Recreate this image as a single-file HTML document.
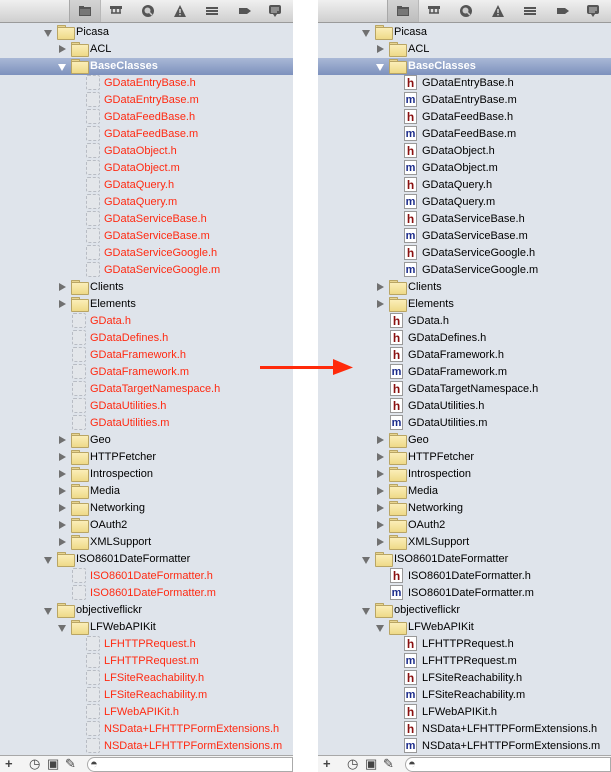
<!DOCTYPE html>
<html><head><meta charset="utf-8"><style>
*{margin:0;padding:0;box-sizing:border-box}
body{width:611px;height:772px;background:#fff;position:relative;overflow:hidden;font-family:"Liberation Sans",sans-serif;font-size:11px}
.p{position:absolute;top:0;width:293px;height:772px;background:#dfe4eb;overflow:hidden}
.tb{height:23px;background:linear-gradient(#f0f0f0,#cfcfcf);border-bottom:1px solid #9a9a9a;position:relative}
.tb .sel{position:absolute;left:69px;top:0;width:32px;height:22px;background:linear-gradient(#d4d4d4,#bdbdbd);border-left:1px solid #a8a8a8;border-right:1px solid #b8b8b8}
.tb svg{position:absolute;top:4px}
.list{padding-top:1px}
.r{display:block;height:17px;line-height:17px;white-space:nowrap;position:relative}
.r b{font-style:normal;display:inline-block;vertical-align:top;position:relative;top:-1px}
.t{width:8px;height:8px;margin:5px 5px 0 0}
.t.c::before{content:"";position:absolute;left:1px;top:0;border-left:7px solid #707070;border-top:4px solid transparent;border-bottom:4px solid transparent}
.t.o::before{content:"";position:absolute;left:0;top:2px;border-top:7px solid #707070;border-left:4px solid transparent;border-right:4px solid transparent}
.f{width:16px;height:13px;margin:2px 3px 0 0}
.f::before{content:"";position:absolute;left:0;top:0;width:7px;height:3px;background:#e8d590;border:1px solid #b9a564;border-bottom:none;border-radius:1px 1px 0 0}
.f::after{content:"";position:absolute;left:0;top:2px;width:16px;height:11px;background:linear-gradient(#fbeeb8,#eed988);border:1px solid #b9a564;border-radius:1px}
.d{width:14px;height:15px;margin:1px 4px 0 0;border:1px dashed #b8bcc4;border-radius:2px;background:#e3e6ea}
.h,.m{width:13px;height:15px;margin:1px 5px 0 0;background:#fff;border:1px solid #999;font-family:"Liberation Sans",sans-serif;font-weight:bold;font-size:12px;line-height:14px;text-align:center}
.h{color:#8a1010}.m{color:#1a2a8a;font-size:11px}
.L .x{color:#ff2a12}
.s{background:linear-gradient(#a9b8d6,#7d91bd);color:#fff;font-weight:bold}
.s .t.o::before{border-top-color:#fff}
.bb{position:absolute;left:0;top:755px;width:293px;height:17px;background:#f4f4f4;border-top:1px solid #a8a8a8}
.bb span{position:absolute;top:0;font-size:13px;line-height:16px;color:#444}
.sf{position:absolute;left:87px;top:1px;width:206px;height:15px;border:1px solid #aaa;border-radius:8px 0 0 8px;background:#fff}
</style></head><body>

<div class="p L" style="left:0">
<div class="tb"><div class="sel"></div>
<svg style="left:78px" width="14" height="14"><rect x="1" y="3" width="12" height="9" fill="#555"/><rect x="1" y="2" width="5" height="2" fill="#555"/><rect x="2" y="5" width="10" height="6" fill="#777"/></svg>
<svg style="left:109px" width="14" height="14"><rect x="1" y="2" width="12" height="3" fill="#555"/><path d="M3 5v4M7 5v4M11 5v4M2 9h10" stroke="#555" stroke-width="1.5" fill="none"/></svg>
<svg style="left:141px" width="14" height="14"><circle cx="7" cy="7" r="6" fill="#555"/><circle cx="6.5" cy="6.5" r="3" fill="#ccc"/><path d="M8 8l3 3" stroke="#ccc" stroke-width="1.5"/></svg>
<svg style="left:173px" width="14" height="14"><path d="M7 1L13 13H1Z" fill="#555"/><rect x="6.3" y="5" width="1.4" height="4" fill="#ddd"/><rect x="6.3" y="10" width="1.4" height="1.4" fill="#ddd"/></svg>
<svg style="left:205px" width="14" height="14"><rect x="1" y="3" width="12" height="2" fill="#555"/><rect x="1" y="6" width="12" height="2" fill="#555"/><rect x="1" y="9" width="12" height="2" fill="#555"/></svg>
<svg style="left:238px" width="14" height="14"><path d="M1 4h8l4 3-4 3H1Z" fill="#555"/></svg>
<svg style="left:268px" width="14" height="14"><rect x="1" y="1" width="12" height="9" rx="2" fill="#555"/><path d="M5 10l2 3 2-3" fill="#555"/><path d="M3 4h8M3 6h8M3 8h6" stroke="#ccc"/></svg>
</div>
<div class="list">
<div class="r" style="padding-left:44px"><b class="t o"></b><b class="f"></b>Picasa</div>
<div class="r" style="padding-left:58px"><b class="t c"></b><b class="f"></b>ACL</div>
<div class="r s" style="padding-left:58px"><b class="t o"></b><b class="f"></b>BaseClasses</div>
<div class="r" style="padding-left:86px"><b class="d"></b><span class="x">GDataEntryBase.h</span></div>
<div class="r" style="padding-left:86px"><b class="d"></b><span class="x">GDataEntryBase.m</span></div>
<div class="r" style="padding-left:86px"><b class="d"></b><span class="x">GDataFeedBase.h</span></div>
<div class="r" style="padding-left:86px"><b class="d"></b><span class="x">GDataFeedBase.m</span></div>
<div class="r" style="padding-left:86px"><b class="d"></b><span class="x">GDataObject.h</span></div>
<div class="r" style="padding-left:86px"><b class="d"></b><span class="x">GDataObject.m</span></div>
<div class="r" style="padding-left:86px"><b class="d"></b><span class="x">GDataQuery.h</span></div>
<div class="r" style="padding-left:86px"><b class="d"></b><span class="x">GDataQuery.m</span></div>
<div class="r" style="padding-left:86px"><b class="d"></b><span class="x">GDataServiceBase.h</span></div>
<div class="r" style="padding-left:86px"><b class="d"></b><span class="x">GDataServiceBase.m</span></div>
<div class="r" style="padding-left:86px"><b class="d"></b><span class="x">GDataServiceGoogle.h</span></div>
<div class="r" style="padding-left:86px"><b class="d"></b><span class="x">GDataServiceGoogle.m</span></div>
<div class="r" style="padding-left:58px"><b class="t c"></b><b class="f"></b>Clients</div>
<div class="r" style="padding-left:58px"><b class="t c"></b><b class="f"></b>Elements</div>
<div class="r" style="padding-left:72px"><b class="d"></b><span class="x">GData.h</span></div>
<div class="r" style="padding-left:72px"><b class="d"></b><span class="x">GDataDefines.h</span></div>
<div class="r" style="padding-left:72px"><b class="d"></b><span class="x">GDataFramework.h</span></div>
<div class="r" style="padding-left:72px"><b class="d"></b><span class="x">GDataFramework.m</span></div>
<div class="r" style="padding-left:72px"><b class="d"></b><span class="x">GDataTargetNamespace.h</span></div>
<div class="r" style="padding-left:72px"><b class="d"></b><span class="x">GDataUtilities.h</span></div>
<div class="r" style="padding-left:72px"><b class="d"></b><span class="x">GDataUtilities.m</span></div>
<div class="r" style="padding-left:58px"><b class="t c"></b><b class="f"></b>Geo</div>
<div class="r" style="padding-left:58px"><b class="t c"></b><b class="f"></b>HTTPFetcher</div>
<div class="r" style="padding-left:58px"><b class="t c"></b><b class="f"></b>Introspection</div>
<div class="r" style="padding-left:58px"><b class="t c"></b><b class="f"></b>Media</div>
<div class="r" style="padding-left:58px"><b class="t c"></b><b class="f"></b>Networking</div>
<div class="r" style="padding-left:58px"><b class="t c"></b><b class="f"></b>OAuth2</div>
<div class="r" style="padding-left:58px"><b class="t c"></b><b class="f"></b>XMLSupport</div>
<div class="r" style="padding-left:44px"><b class="t o"></b><b class="f"></b>ISO8601DateFormatter</div>
<div class="r" style="padding-left:72px"><b class="d"></b><span class="x">ISO8601DateFormatter.h</span></div>
<div class="r" style="padding-left:72px"><b class="d"></b><span class="x">ISO8601DateFormatter.m</span></div>
<div class="r" style="padding-left:44px"><b class="t o"></b><b class="f"></b>objectiveflickr</div>
<div class="r" style="padding-left:58px"><b class="t o"></b><b class="f"></b>LFWebAPIKit</div>
<div class="r" style="padding-left:86px"><b class="d"></b><span class="x">LFHTTPRequest.h</span></div>
<div class="r" style="padding-left:86px"><b class="d"></b><span class="x">LFHTTPRequest.m</span></div>
<div class="r" style="padding-left:86px"><b class="d"></b><span class="x">LFSiteReachability.h</span></div>
<div class="r" style="padding-left:86px"><b class="d"></b><span class="x">LFSiteReachability.m</span></div>
<div class="r" style="padding-left:86px"><b class="d"></b><span class="x">LFWebAPIKit.h</span></div>
<div class="r" style="padding-left:86px"><b class="d"></b><span class="x">NSData+LFHTTPFormExtensions.h</span></div>
<div class="r" style="padding-left:86px"><b class="d"></b><span class="x">NSData+LFHTTPFormExtensions.m</span></div>
</div>
<div class="bb"><span style="left:5px;font-weight:bold">+</span><span style="left:29px">◷</span><span style="left:47px">▣</span><span style="left:65px">✎</span><div class="sf"></div><span style="left:90px">◓</span></div>
</div>

<div class="p R" style="left:318px">
<div class="tb"><div class="sel"></div>
<svg style="left:78px" width="14" height="14"><rect x="1" y="3" width="12" height="9" fill="#555"/><rect x="1" y="2" width="5" height="2" fill="#555"/><rect x="2" y="5" width="10" height="6" fill="#777"/></svg>
<svg style="left:109px" width="14" height="14"><rect x="1" y="2" width="12" height="3" fill="#555"/><path d="M3 5v4M7 5v4M11 5v4M2 9h10" stroke="#555" stroke-width="1.5" fill="none"/></svg>
<svg style="left:141px" width="14" height="14"><circle cx="7" cy="7" r="6" fill="#555"/><circle cx="6.5" cy="6.5" r="3" fill="#ccc"/><path d="M8 8l3 3" stroke="#ccc" stroke-width="1.5"/></svg>
<svg style="left:173px" width="14" height="14"><path d="M7 1L13 13H1Z" fill="#555"/><rect x="6.3" y="5" width="1.4" height="4" fill="#ddd"/><rect x="6.3" y="10" width="1.4" height="1.4" fill="#ddd"/></svg>
<svg style="left:205px" width="14" height="14"><rect x="1" y="3" width="12" height="2" fill="#555"/><rect x="1" y="6" width="12" height="2" fill="#555"/><rect x="1" y="9" width="12" height="2" fill="#555"/></svg>
<svg style="left:238px" width="14" height="14"><path d="M1 4h8l4 3-4 3H1Z" fill="#555"/></svg>
<svg style="left:268px" width="14" height="14"><rect x="1" y="1" width="12" height="9" rx="2" fill="#555"/><path d="M5 10l2 3 2-3" fill="#555"/><path d="M3 4h8M3 6h8M3 8h6" stroke="#ccc"/></svg>
</div>
<div class="list">
<div class="r" style="padding-left:44px"><b class="t o"></b><b class="f"></b>Picasa</div>
<div class="r" style="padding-left:58px"><b class="t c"></b><b class="f"></b>ACL</div>
<div class="r s" style="padding-left:58px"><b class="t o"></b><b class="f"></b>BaseClasses</div>
<div class="r" style="padding-left:86px"><b class="h">h</b>GDataEntryBase.h</div>
<div class="r" style="padding-left:86px"><b class="m">m</b>GDataEntryBase.m</div>
<div class="r" style="padding-left:86px"><b class="h">h</b>GDataFeedBase.h</div>
<div class="r" style="padding-left:86px"><b class="m">m</b>GDataFeedBase.m</div>
<div class="r" style="padding-left:86px"><b class="h">h</b>GDataObject.h</div>
<div class="r" style="padding-left:86px"><b class="m">m</b>GDataObject.m</div>
<div class="r" style="padding-left:86px"><b class="h">h</b>GDataQuery.h</div>
<div class="r" style="padding-left:86px"><b class="m">m</b>GDataQuery.m</div>
<div class="r" style="padding-left:86px"><b class="h">h</b>GDataServiceBase.h</div>
<div class="r" style="padding-left:86px"><b class="m">m</b>GDataServiceBase.m</div>
<div class="r" style="padding-left:86px"><b class="h">h</b>GDataServiceGoogle.h</div>
<div class="r" style="padding-left:86px"><b class="m">m</b>GDataServiceGoogle.m</div>
<div class="r" style="padding-left:58px"><b class="t c"></b><b class="f"></b>Clients</div>
<div class="r" style="padding-left:58px"><b class="t c"></b><b class="f"></b>Elements</div>
<div class="r" style="padding-left:72px"><b class="h">h</b>GData.h</div>
<div class="r" style="padding-left:72px"><b class="h">h</b>GDataDefines.h</div>
<div class="r" style="padding-left:72px"><b class="h">h</b>GDataFramework.h</div>
<div class="r" style="padding-left:72px"><b class="m">m</b>GDataFramework.m</div>
<div class="r" style="padding-left:72px"><b class="h">h</b>GDataTargetNamespace.h</div>
<div class="r" style="padding-left:72px"><b class="h">h</b>GDataUtilities.h</div>
<div class="r" style="padding-left:72px"><b class="m">m</b>GDataUtilities.m</div>
<div class="r" style="padding-left:58px"><b class="t c"></b><b class="f"></b>Geo</div>
<div class="r" style="padding-left:58px"><b class="t c"></b><b class="f"></b>HTTPFetcher</div>
<div class="r" style="padding-left:58px"><b class="t c"></b><b class="f"></b>Introspection</div>
<div class="r" style="padding-left:58px"><b class="t c"></b><b class="f"></b>Media</div>
<div class="r" style="padding-left:58px"><b class="t c"></b><b class="f"></b>Networking</div>
<div class="r" style="padding-left:58px"><b class="t c"></b><b class="f"></b>OAuth2</div>
<div class="r" style="padding-left:58px"><b class="t c"></b><b class="f"></b>XMLSupport</div>
<div class="r" style="padding-left:44px"><b class="t o"></b><b class="f"></b>ISO8601DateFormatter</div>
<div class="r" style="padding-left:72px"><b class="h">h</b>ISO8601DateFormatter.h</div>
<div class="r" style="padding-left:72px"><b class="m">m</b>ISO8601DateFormatter.m</div>
<div class="r" style="padding-left:44px"><b class="t o"></b><b class="f"></b>objectiveflickr</div>
<div class="r" style="padding-left:58px"><b class="t o"></b><b class="f"></b>LFWebAPIKit</div>
<div class="r" style="padding-left:86px"><b class="h">h</b>LFHTTPRequest.h</div>
<div class="r" style="padding-left:86px"><b class="m">m</b>LFHTTPRequest.m</div>
<div class="r" style="padding-left:86px"><b class="h">h</b>LFSiteReachability.h</div>
<div class="r" style="padding-left:86px"><b class="m">m</b>LFSiteReachability.m</div>
<div class="r" style="padding-left:86px"><b class="h">h</b>LFWebAPIKit.h</div>
<div class="r" style="padding-left:86px"><b class="h">h</b>NSData+LFHTTPFormExtensions.h</div>
<div class="r" style="padding-left:86px"><b class="m">m</b>NSData+LFHTTPFormExtensions.m</div>
</div>
<div class="bb"><span style="left:5px;font-weight:bold">+</span><span style="left:29px">◷</span><span style="left:47px">▣</span><span style="left:65px">✎</span><div class="sf"></div><span style="left:90px">◓</span></div>
</div>

<svg style="position:absolute;left:255px;top:355px" width="100" height="25"><path d="M5 12.5H80" stroke="#ff2a0a" stroke-width="3"/><path d="M78 4L98 12.5L78 20Z" fill="#ff2a0a"/></svg>
</body></html>
